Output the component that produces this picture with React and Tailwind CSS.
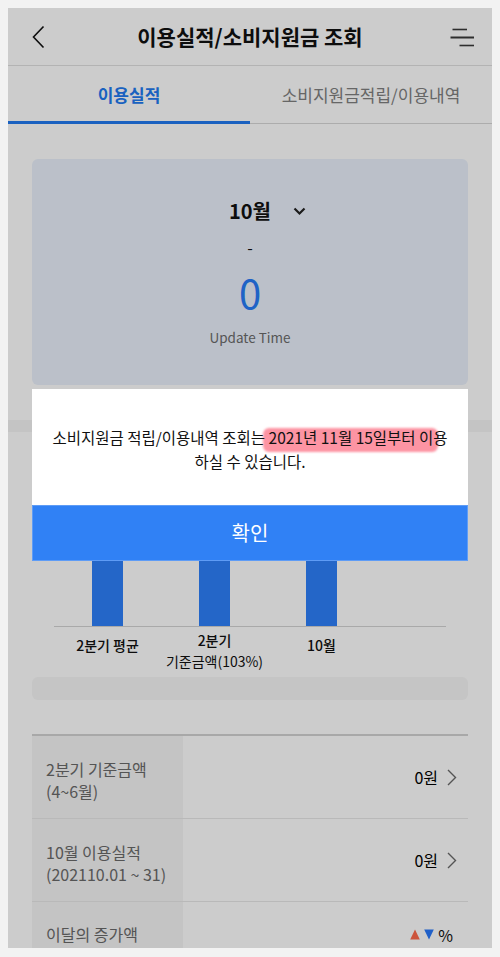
import { useState } from 'react'

const BARS = [
  { key: 'avg', label: ['2분기 평균'] },
  { key: 'base', label: ['2분기', '기준금액(103%)'] },
  { key: 'month', label: ['10월'] },
]

const ROWS = [
  { title: '2분기 기준금액', sub: '(4~6월)', value: '0원' },
  { title: '10월 이용실적', sub: '(202110.01 ~ 31)', value: '0원' },
]

function BackIcon() {
  return (
    <svg width="13" height="24" viewBox="0 0 13 24" fill="none">
      <path d="M11.5 1.5 L1.5 12 L11.5 22.5" stroke="#111" strokeWidth="1.6" />
    </svg>
  )
}

function MenuIcon() {
  return (
    <svg width="25" height="20" viewBox="0 0 25 20" fill="none">
      <path d="M2.5 2.5 H17" stroke="#3a3a3a" strokeWidth="1.6" />
      <path d="M0.5 10.5 H24" stroke="#3a3a3a" strokeWidth="2" />
      <path d="M9.5 18.5 H24" stroke="#3a3a3a" strokeWidth="1.6" />
    </svg>
  )
}

function ChevronDown() {
  return (
    <svg width="13" height="9" viewBox="0 0 13 9" fill="none">
      <path d="M1.5 1.5 L6.5 6.5 L11.5 1.5" stroke="#222" strokeWidth="2.2" />
    </svg>
  )
}

function ChevronRight() {
  return (
    <svg width="10" height="17" viewBox="0 0 10 17" fill="none">
      <path d="M1 1 L8.5 8.5 L1 16" stroke="#6a6a6a" strokeWidth="1.4" />
    </svg>
  )
}

function Triangle({ up, color }) {
  return (
    <svg width="10" height="11" viewBox="0 0 10 11">
      <path d={up ? 'M5 0.5 L9.8 10.5 L0.2 10.5 Z' : 'M0.2 0.5 L9.8 0.5 L5 10.5 Z'} fill={color} />
    </svg>
  )
}

export default function App() {
  const [tab, setTab] = useState(0)
  const [open, setOpen] = useState(true)

  return (
    <div className="min-h-screen bg-[#f2f2f2] px-2 pt-2 pb-[9px] font-['Noto_Sans_CJK_KR','Noto_Sans',sans-serif]">
      <div className="relative h-[940px] overflow-hidden bg-white">
        {/* header */}
        <header className="flex h-[58px] items-center border-b border-[#e0e0e0]">
          <div className="flex w-[70px] items-center pl-6">
            <BackIcon />
          </div>
          <h1 className="flex-1 text-center text-[21px] font-bold text-[#111]">이용실적/소비지원금 조회</h1>
          <div className="flex w-[70px] items-center justify-end pr-[17px]">
            <MenuIcon />
          </div>
        </header>

        {/* tabs */}
        <nav className="grid grid-cols-2">
          {['이용실적', '소비지원금적립/이용내역'].map(function (name, i) {
            return (
              <button
                key={name}
                onClick={() => setTab(i)}
                className={
                  'flex h-[58px] items-center justify-center text-[17px] ' +
                  (tab === i
                    ? 'border-b-[3px] border-[#217af0] pt-[3px] font-bold text-[#217af0]'
                    : 'border-b border-[#d8d8d8] pt-[1px] text-[#808080]')
                }
              >
                {name}
              </button>
            )
          })}
        </nav>

        {/* summary card */}
        <section className="px-6 pt-[35px]">
          <div className="flex h-[226px] flex-col items-center rounded-md bg-[#eaf1fc] pt-[38px]">
            <div className="relative flex h-7 items-center">
              <span className="text-[20px] font-bold leading-7 text-[#111]">10월</span>
              <span className="absolute left-[64px] top-[10px]">
                <ChevronDown />
              </span>
            </div>
            <div className="mt-3 text-[16px] leading-5 text-[#111]">-</div>
            <div className="mt-[11px] text-[40px] leading-[48px] text-[#277cf8]">0</div>
            <div className="mt-[11px] text-[13.5px] leading-5 text-[#6b6b6b]">Update Time</div>
          </div>
        </section>

        <div className="mt-[35px] h-3 bg-[#f5f5f5]" />

        {/* chart */}
        <section className="px-6">
          <div className="ml-[22px] w-[392px] pt-[40px]">
            <div className="grid grid-cols-[107px_107px_107px] border-b border-[#d4d4d4]">
              {BARS.map(function (b) {
                return (
                  <div key={b.key} className="flex justify-center">
                    <div className="h-[154px] w-[31px] bg-[#2e80fa]" />
                  </div>
                )
              })}
            </div>
            <div className="grid grid-cols-[107px_107px_107px] items-start">
              {BARS.map(function (b) {
                return (
                  <div
                    key={b.key}
                    className={'text-center text-[14px] text-[#111] ' + (b.label.length > 1 ? 'mt-[3px] leading-[21px]' : 'mt-[8px] leading-5')}
                  >
                    <div className="font-medium">{b.label[0]}</div>
                    {b.label[1] && <div>{b.label[1]}</div>}
                  </div>
                )
              })}
            </div>
          </div>
          <div className="mt-[5px] h-[23px] rounded-md bg-[#f7f7f7]" />
        </section>

        {/* detail table */}
        <section className="mt-[34px] px-6">
          <div className="border-t-2 border-[#d2d2d2]">
            {ROWS.map(function (r) {
              return (
                <div key={r.title} className="flex h-[83px] border-b border-[#e8e8e8]">
                  <div className="w-[151px] bg-[#f5f5f5] pl-[14px] pt-[22px] text-[16px] leading-[22px] text-[#6a6a6a]">
                    <div>{r.title}</div>
                    <div>{r.sub}</div>
                  </div>
                  <div className="flex flex-1 items-center justify-end gap-[9px] pr-[11px]">
                    <span className="text-[16px] text-[#000]">{r.value}</span>
                    <ChevronRight />
                  </div>
                </div>
              )
            })}
            <div className="flex h-[83px]">
              <div className="w-[151px] bg-[#f5f5f5] pl-[14px] pt-[21px] text-[16px] leading-[22px] text-[#6a6a6a]">
                이달의 증가액
              </div>
              <div className="flex flex-1 items-start justify-end gap-[4px] pr-[15px] pt-[27px]">
                <Triangle up color="#ff6a4b" />
                <Triangle color="#2878fa" />
                <span className="-mt-[6px] text-[16px] text-[#111]">%</span>
              </div>
            </div>
          </div>
        </section>

        {/* notice dialog */}
        {open && (
          <div className="absolute inset-0 flex flex-col items-center justify-center bg-black/20 pb-[6px]">
            <div className="w-[436px] bg-white">
              <p className="relative isolate px-4 pb-8 pt-9 text-center text-[15.5px] leading-6 text-[#111]">
                소비지원금 적립/이용내역 조회는{' '}
                <span className="relative">
                  <span className="absolute -left-[6px] -right-[5px] top-[2px] -bottom-[4px] -z-10 rounded-[6px] bg-[#fd94a3] blur-[1px]" />
                  2021년 11월 15일부터 이
                </span>
                용 하실 수 있습니다.
              </p>
              <button
                onClick={() => setOpen(false)}
                className="flex h-[56px] w-full items-center justify-center border border-[#5e9cf6] bg-[#3081f5] text-[20px] text-white"
              >
                확인
              </button>
            </div>
          </div>
        )}
      </div>
    </div>
  )
}
